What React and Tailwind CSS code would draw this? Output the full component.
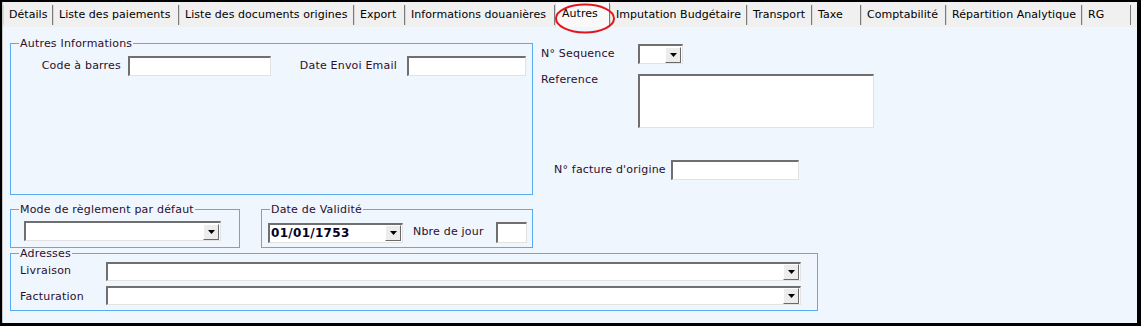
import React from 'react';

const tabs = [
  { label: 'Détails', w: 50 },
  { label: 'Liste des paiements', w: 126 },
  { label: 'Liste des documents origines', w: 175 },
  { label: 'Export', w: 51 },
  { label: 'Informations douanières', w: 150 },
  { label: 'Autres', w: 55, active: true },
  { label: 'Imputation Budgétaire', w: 137 },
  { label: 'Transport', w: 65 },
  { label: 'Taxe', w: 49 },
  { label: 'Comptabilité', w: 85 },
  { label: 'Répartition Analytique', w: 136 },
  { label: 'RG', w: 49 },
];

const font = { fontFamily: '"DejaVu Sans", Verdana, sans-serif' };

function Arrow() {
  return (
    <div className="flex h-[16px] w-[16px] shrink-0 items-center justify-center border border-t-white border-l-white border-r-[#6a6a6a] border-b-[#6a6a6a] bg-[#ececec]">
      <svg width="7" height="4" viewBox="0 0 7 4">
        <polygon points="0,0 7,0 3.5,4" fill="#000" />
      </svg>
    </div>
  );
}

function Field({ className = '' }) {
  return (
    <div className={`border-t-2 border-l-2 border-t-[#6f6f6f] border-l-[#6f6f6f] border-b border-r border-b-[#e2e2e2] border-r-[#e2e2e2] bg-white ${className}`} />
  );
}

function Combo({ className = '', value, bold }) {
  return (
    <div className={`flex items-center justify-between border-t-2 border-l-2 border-t-[#6f6f6f] border-l-[#6f6f6f] border-b border-r border-b-[#e2e2e2] border-r-[#e2e2e2] bg-white pr-[1px] ${className}`}>
      <span className={`pl-[1px] text-[12px] leading-none tracking-[0.3px] text-[#000020] ${bold ? 'font-bold' : ''}`}>{value}</span>
      <Arrow />
    </div>
  );
}

function Group({ title, className = '', children }) {
  return (
    <fieldset className={`border border-[#58aaf3] ${className}`}>
      <legend className="ml-[8px] px-[1px] text-[11px] leading-[13px] text-[#2b0f2b]">{title}</legend>
      {children}
    </fieldset>
  );
}

export default function App() {
  return (
    <div className="flex h-[326px] w-[1141px] flex-col bg-black pt-[2px] pl-[2px] pr-[4px] pb-[3px] text-[11px] tracking-[0.2px] text-[#2b0f2b]" style={font}>
      {/* tab strip */}
      <div className="relative flex h-[25px] border-l border-[#c8c8c8] bg-[#f0f0f0] pt-[3px] tracking-[0.05px]">
        {tabs.map((t) =>
          t.active ? (
            <div key={t.label} style={{ width: t.w }} className="-mt-[2px] flex h-[24px] shrink-0 items-center border-r border-r-[#7a7a7a] border-l border-l-[#d8d8d8] bg-[#f9f9f9] pl-[6px] pb-[2px] text-[11px] text-black">
              {t.label}
            </div>
          ) : (
            <div key={t.label} style={{ width: t.w }} className="mb-[2px] flex shrink-0 items-center border-r border-r-[#7a7a7a] border-l border-l-[#d8d8d8] pl-[5px] whitespace-nowrap text-[11px] text-black">
              {t.label}
            </div>
          )
        )}
        <svg className="pointer-events-none absolute left-[550px] top-[1px]" width="64" height="31" viewBox="0 0 64 31">
          <ellipse cx="32" cy="15.5" rx="29" ry="14" fill="none" stroke="#e3141c" strokeWidth="2" />
        </svg>
      </div>

      <div className="flex flex-1 flex-col border-l border-[#c8c8c8] bg-[#eff6fe] pl-[7px] pt-[10px]">
        <div className="flex">
          <div className="flex w-[523px] flex-col">
            <Group title="Autres Informations" className="h-[158px] w-[523px]">
              <div className="mt-[6px] flex items-center">
                <span className="w-[110px] text-right">Code à barres</span>
                <Field className="ml-[7px] h-[20px] w-[143px]" />
                <span className="w-[126px] text-right">Date Envoi Email</span>
                <Field className="ml-[10px] h-[20px] w-[119px]" />
              </div>
            </Group>

            <div className="mt-[8px] flex">
              <Group title="Mode de règlement par défaut" className="h-[45px] w-[230px]">
                <div className="mt-[5px] pl-[13px]">
                  <Combo className="h-[20px] w-[197px]" />
                </div>
              </Group>
              <Group title="Date de Validité" className="ml-[21px] h-[45px] w-[272px]">
                <div className="mt-[6px] flex items-center pl-[6px]">
                  <Combo className="h-[20px] w-[135px]" value="01/01/1753" bold />
                  <span className="ml-[10px] w-[83px]">Nbre de jour</span>
                  <Field className="h-[21px] w-[31px]" />
                </div>
              </Group>
            </div>
          </div>

          <div className="ml-[8px] flex flex-col">
            <div className="mt-[7px] flex items-center">
              <span className="w-[97px] pt-[1px]">N° Sequence</span>
              <Combo className="h-[20px] w-[45px]" />
            </div>
            <div className="mt-[10px] flex items-start">
              <span className="w-[97px] leading-[12px]">Reference</span>
              <Field className="h-[54px] w-[236px]" />
            </div>
            <div className="mt-[32px] flex items-center pl-[13px]">
              <span className="w-[117px]">N° facture d'origine</span>
              <Field className="h-[20px] w-[128px]" />
            </div>
          </div>
        </div>

        <Group title="Adresses" className="-mt-[1px] h-[64px] w-[808px]">
          <div className="mt-[2px] flex flex-col gap-[5px] pl-[9px]">
            <div className="flex items-center">
              <span className="w-[86px]">Livraison</span>
              <Combo className="h-[19px] w-[695px]" />
            </div>
            <div className="flex items-center">
              <span className="w-[86px] pt-[3px]">Facturation</span>
              <Combo className="h-[19px] w-[695px]" />
            </div>
          </div>
        </Group>
      </div>
    </div>
  );
}
